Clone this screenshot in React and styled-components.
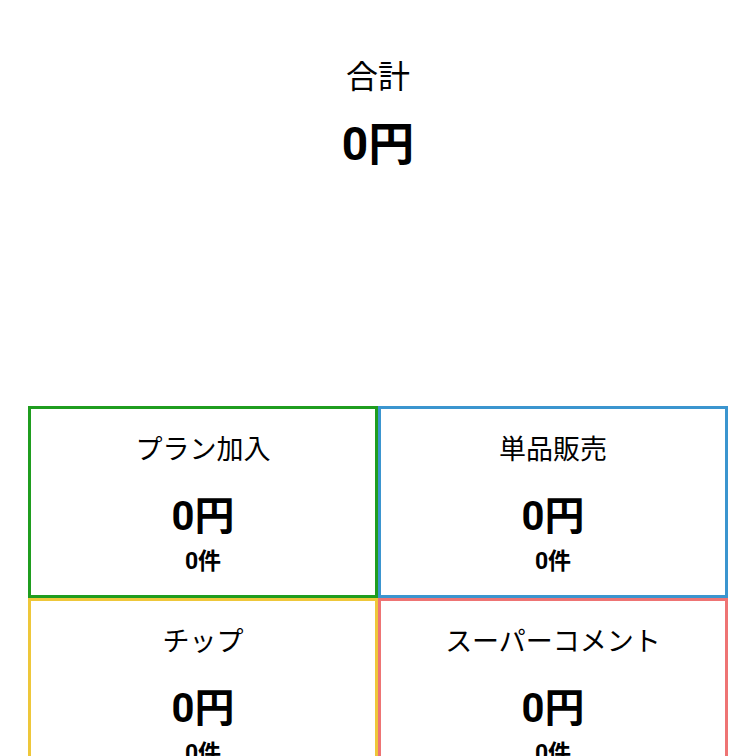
import styled, { createGlobalStyle } from 'styled-components';

const GlobalStyle = createGlobalStyle`
  body {
    margin: 0;
    background: #ffffff;
    font-family: Roboto, "Noto Sans CJK JP", sans-serif;
    color: #000;
  }
`;

const Page = styled.div`
  padding: 0 28px;
`;

const Summary = styled.div`
  display: flex;
  flex-direction: column;
  align-items: center;
  padding-top: 53px;
  gap: 14px;
`;

const SummaryLabel = styled.div`
  font-size: 32px;
  line-height: 48px;
`;

const SummaryValue = styled.div`
  font-size: 46px;
  font-weight: 700;
  line-height: 58px;
`;

const Grid = styled.div`
  display: grid;
  grid-template-columns: 1fr 1fr;
  margin-top: 233px;
`;

const Card = styled.div`
  display: flex;
  flex-direction: column;
  align-items: center;
  height: 192px;
  box-sizing: border-box;
  border: 3px solid ${p => p.$color};
  padding-top: 20px;
`;

const CardTitle = styled.div`
  font-size: 27px;
  line-height: 42px;
`;

const CardAmount = styled.div`
  margin-top: 22px;
  font-size: 40px;
  font-weight: 700;
  line-height: 48px;
`;

const CardCount = styled.div`
  margin-top: 6px;
  font-size: 23px;
  font-weight: 700;
  line-height: 29px;
`;

const categories = [
  { title: 'プラン加入', color: '#1f9d1f' },
  { title: '単品販売', color: '#3b95cf' },
  { title: 'チップ', color: '#eec73a' },
  { title: 'スーパーコメント', color: '#ee7474' },
];

export default function App() {
  return (
    <>
      <GlobalStyle />
      <Page>
        <Summary>
          <SummaryLabel>合計</SummaryLabel>
          <SummaryValue>0円</SummaryValue>
        </Summary>
        <Grid>
          {categories.map(c => (
            <Card key={c.title} $color={c.color}>
              <CardTitle>{c.title}</CardTitle>
              <CardAmount>0円</CardAmount>
              <CardCount>0件</CardCount>
            </Card>
          ))}
        </Grid>
      </Page>
    </>
  );
}
